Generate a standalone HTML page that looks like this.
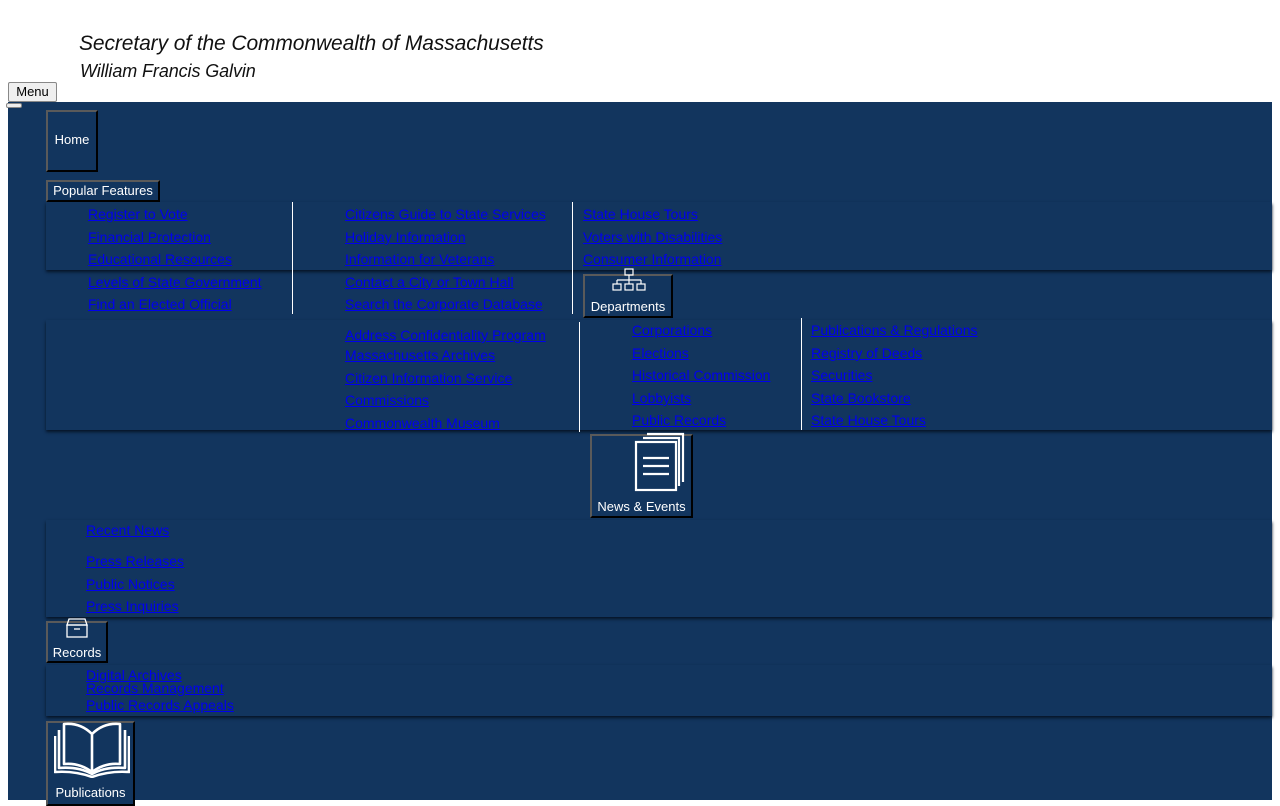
<!DOCTYPE html>
<html><head><meta charset="utf-8"><style>
*{margin:0;padding:0;box-sizing:border-box}
body{width:1280px;height:800px;overflow:hidden;background:#fff;font-family:"Liberation Sans",sans-serif;position:relative}
.a{position:absolute}
.t{font-style:italic;color:#111;font-size:21px;white-space:nowrap;letter-spacing:-0.1px}
.nav{position:absolute;left:8px;top:102px;width:1264px;height:698px;background:#12355e}
.btn{position:absolute;border:2px solid;border-color:#5a5a5a #000 #000 #5a5a5a;color:#fff;font-size:13px;text-align:center;background:#12355e;white-space:nowrap}
.p{position:absolute;left:46px;width:1226px;background:#12355e;box-shadow:0 2px 3px #061425}
a{color:#0000ee;text-decoration:underline;font-size:14px;position:absolute;white-space:nowrap;margin-top:1px}
.v{position:absolute;width:1px;background:#fff}
</style></head><body>
<div class="a t" style="left:79px;top:32px">Secretary of the Commonwealth of Massachusetts</div>
<div class="a t" style="left:80px;top:61px;font-size:18px">William Francis Galvin</div>
<div class="a" style="left:8px;top:82px;width:49px;height:20px;border:1px solid #888;border-radius:2px;background:#efefef;font-size:13px;text-align:center;line-height:18px">Menu</div>
<div class="nav"></div>
<div class="a" style="left:6px;top:103px;width:16px;height:5px;border:1px solid #888;border-radius:2px;background:#eee"></div>
<div class="btn" style="left:46px;top:110px;width:52px;height:62px;line-height:56px">Home</div>
<div class="p" style="top:202px;height:68px"></div>
<div class="btn" style="left:46px;top:180px;width:114px;height:22px;line-height:18px">Popular Features</div>
<div class="v" style="left:292px;top:202px;height:112px"></div>
<div class="v" style="left:572px;top:202px;height:112px"></div>
<a style="left:88px;top:205px">Register to Vote</a>
<a style="left:88px;top:228px">Financial Protection</a>
<a style="left:88px;top:250px">Educational Resources</a>
<a style="left:88px;top:273px">Levels of State Government</a>
<a style="left:88px;top:295px">Find an Elected Official</a>
<a style="left:345px;top:205px">Citizens Guide to State Services</a>
<a style="left:345px;top:228px">Holiday Information</a>
<a style="left:345px;top:250px">Information for Veterans</a>
<a style="left:345px;top:273px">Contact a City or Town Hall</a>
<a style="left:345px;top:295px">Search the Corporate Database</a>
<a style="left:583px;top:205px">State House Tours</a>
<a style="left:583px;top:228px">Voters with Disabilities</a>
<a style="left:583px;top:250px">Consumer Information</a>
<div class="p" style="top:320px;height:110px"></div>
<div class="btn" style="left:583px;top:274px;width:90px;height:44px;padding-top:22px;line-height:18px">Departments</div>
<svg class="a" style="left:612px;top:268px" width="34" height="24" viewBox="0 0 34 24" fill="none" stroke="#fff" stroke-width="1.2"><rect x="13" y="1" width="8" height="6"/><path d="M17 7v5M5 12h24M5 12v4M17 12v4M29 12v4"/><rect x="1" y="16" width="8" height="6"/><rect x="13" y="16" width="8" height="6"/><rect x="25" y="16" width="8" height="6"/></svg>
<div class="v" style="left:579px;top:322px;height:110px"></div>
<div class="v" style="left:801px;top:318px;height:112px"></div>
<a style="left:345px;top:326px">Address Confidentiality Program</a>
<a style="left:345px;top:346px">Massachusetts Archives</a>
<a style="left:345px;top:369px">Citizen Information Service</a>
<a style="left:345px;top:391px">Commissions</a>
<a style="left:345px;top:414px">Commonwealth Museum</a>
<a style="left:632px;top:321px">Corporations</a>
<a style="left:632px;top:344px">Elections</a>
<a style="left:632px;top:366px">Historical Commission</a>
<a style="left:632px;top:389px">Lobbyists</a>
<a style="left:632px;top:411px">Public Records</a>
<a style="left:811px;top:321px">Publications &amp; Regulations</a>
<a style="left:811px;top:344px">Registry of Deeds</a>
<a style="left:811px;top:366px">Securities</a>
<a style="left:811px;top:389px">State Bookstore</a>
<a style="left:811px;top:411px">State House Tours</a>
<div class="btn" style="left:590px;top:434px;width:103px;height:84px;padding-top:62px;line-height:18px">News &amp; Events</div>
<svg class="a" style="left:633px;top:430px" width="54" height="62" viewBox="0 0 54 62" fill="none" stroke="#fff" stroke-width="2.2"><path d="M14 4h36v48M10 8h36v48"/><rect x="3" y="12" width="40" height="48" fill="#12355e"/><path d="M10 28h26M10 36h26M10 44h26"/></svg>
<div class="p" style="top:520px;height:97px"></div>
<a style="left:86px;top:521px">Recent News</a>
<a style="left:86px;top:552px">Press Releases</a>
<a style="left:86px;top:575px">Public Notices</a>
<a style="left:86px;top:597px">Press Inquiries</a>
<div class="btn" style="left:46px;top:621px;width:62px;height:42px;padding-top:21px;line-height:18px">Records</div>
<svg class="a" style="left:65px;top:617px" width="24" height="22" viewBox="0 0 24 22" fill="none" stroke="#fff" stroke-width="1.3"><path d="M4 2h16l2 6H2z"/><rect x="2" y="8" width="20" height="12"/><path d="M9 12h6"/></svg>
<div class="p" style="top:665px;height:51px"></div>
<a style="left:86px;top:666px">Digital Archives</a>
<a style="left:86px;top:679px">Records Management</a>
<a style="left:86px;top:696px">Public Records Appeals</a>
<div class="btn" style="left:46px;top:721px;width:89px;height:85px;padding-top:61px;line-height:18px">Publications</div>
<svg class="a" style="left:54px;top:720px" width="76" height="58" viewBox="0 0 76 58" fill="none" stroke="#fff" stroke-width="2.6" stroke-linejoin="round"><path d="M38 14C30 6 20 3 10 4v40c10-1 20 2 28 8 8-6 18-9 28-8V4C56 3 46 6 38 14zM38 14v38"/><path d="M5 10v38c12-1 24 1 33 6 9-5 21-7 33-6V10"/><path d="M1 16v36c14-1 26 1 37 5 11-4 23-6 37-5V16"/></svg>
</body></html>
